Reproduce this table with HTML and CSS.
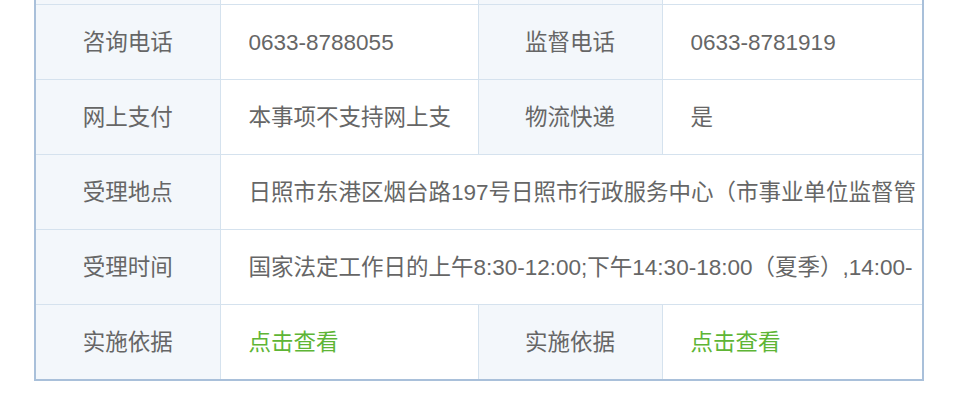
FILE: index.html
```html
<!DOCTYPE html>
<html lang="zh-CN">
<head>
<meta charset="utf-8">
<title>办事指南</title>
<link rel="stylesheet" href="styles.css">
</head>
<body>
<div class="wrap">
<table class="info">
  <colgroup>
    <col class="c-label"><col class="c-value"><col class="c-label2"><col class="c-value2">
  </colgroup>
  <tbody>
    <tr>
      <th>办理时限</th><td><div class="clip">1个工作日</div></td>
      <th>收费标准</th><td><div class="clip">不收费</div></td>
    </tr>
    <tr>
      <th>咨询电话</th><td><div class="clip">0633-8788055</div></td>
      <th>监督电话</th><td><div class="clip">0633-8781919</div></td>
    </tr>
    <tr>
      <th>网上支付</th><td><div class="clip">本事项不支持网上支付</div></td>
      <th>物流快递</th><td><div class="clip">是</div></td>
    </tr>
    <tr>
      <th>受理地点</th><td class="wide" colspan="3"><div class="clip">日照市东港区烟台路197号日照市行政服务中心（市事业单位监督管理局窗口）</div></td>
    </tr>
    <tr>
      <th>受理时间</th><td class="wide" colspan="3"><div class="clip">国家法定工作日的上午8:30-12:00;下午14:30-18:00（夏季）,14:00-17:30（冬季）</div></td>
    </tr>
    <tr>
      <th>实施依据</th><td><div class="clip"><a class="link" href="#">点击查看</a></div></td>
      <th>实施依据</th><td><div class="clip"><a class="link" href="#">点击查看</a></div></td>
    </tr>
  </tbody>
</table>
</div>
</body>
</html>
```

FILE: styles.css
```css
html, body {
  margin: 0;
  padding: 0;
  background: #fff;
}
.wrap {
  padding-left: 34px;
  overflow: hidden;
  height: 411px;
}
.info {
  margin-top: -72px;
  width: 888px;
  border-collapse: collapse;
  table-layout: fixed;
  border: 2px solid #a9c0da;
  font-family: "Liberation Sans", "Noto Sans CJK SC", sans-serif;
  font-size: 22.5px;
  line-height: 32px;
  color: #666;
}
.c-label { width: 185px; }
.c-value { width: 258px; }
.c-label2 { width: 184px; }
.c-value2 { width: 261px; }
.info th, .info td {
  height: 72px;
  border: 1px solid #d5e2ee;
  padding: 2px 0 0 0;
  vertical-align: middle;
}
.info th {
  background: #f3f7fb;
  font-weight: normal;
  text-align: center;
}
.info td {
  text-align: left;
  padding: 2px 8px 0 28px;
}
.info td.wide {
  padding-right: 0;
}
.clip {
  height: 32px;
  overflow: hidden;
}
.link {
  color: #5eb535;
  text-decoration: none;
}
```
